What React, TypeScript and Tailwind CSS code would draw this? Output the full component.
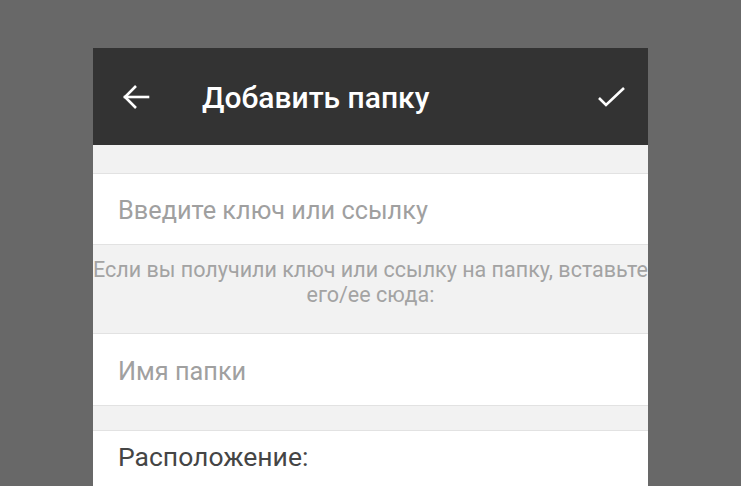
import React from "react";

export default function App() {
  return (
    <div
      className="h-[486px] w-[741px] overflow-hidden bg-[#686868] flex justify-center pt-[48px]"
      style={{ fontFamily: "Roboto, 'Noto Sans', sans-serif" }}
    >
      <div className="w-[555px] flex flex-col bg-[#f2f2f2] shrink-0">
        <div className="h-[97px] shrink-0 bg-[#333333] flex items-center">
          <div className="w-[109px] flex items-center pl-[29px]">
            <svg width="28" height="28" viewBox="0 0 28 28" fill="none" stroke="#ffffff" strokeWidth="2.6" strokeLinecap="square">
              <path d="M3 14H26" />
              <path d="M14 3L3 14L14 25" strokeLinecap="butt" strokeLinejoin="miter" />
            </svg>
          </div>
          <div className="flex-1 text-white text-[30px] font-medium leading-none pt-[3px]">Добавить папку</div>
          <div className="pr-[22px]">
            <svg width="29" height="22" viewBox="0 0 29 22" fill="none" stroke="#ffffff" strokeWidth="2.6">
              <path d="M2 12L9 19L27 2" />
            </svg>
          </div>
        </div>
        <div className="h-[29px] shrink-0 bg-[#f2f2f2] border-b border-[#e2e2e2]" />
        <div className="h-[71px] shrink-0 bg-white border-b border-[#e2e2e2] flex items-center pl-[25px] pt-[3px]">
          <span className="text-[25.3px] text-[#a0a0a0]">Введите ключ или ссылку</span>
        </div>
        <div className="h-[89px] shrink-0 bg-[#f2f2f2] border-b border-[#e2e2e2] overflow-hidden pt-[12px]">
          <p className="text-center text-[21.5px] leading-[25px] text-[#a3a3a3] whitespace-nowrap -mx-[20px]">
            Если вы получили ключ или ссылку на папку, вставьте
            <br />
            его/ее сюда:
          </p>
        </div>
        <div className="h-[72px] shrink-0 bg-white border-b border-[#e2e2e2] flex items-center pl-[25px] pt-[4px]">
          <span className="text-[25.3px] text-[#a0a0a0]">Имя папки</span>
        </div>
        <div className="h-[25px] shrink-0 bg-[#f2f2f2] border-b border-[#e2e2e2]" />
        <div className="bg-white pl-[25px] pt-[9px] h-[120px] shrink-0">
          <div className="text-[26.5px] text-[#454545] leading-[34px]">Расположение:</div>
          <div className="text-[21px] text-[#b0b0b0] leading-[24px] mt-[9px]">/storage/emulated/0/Resilio Sync/Folder</div>
        </div>
      </div>
    </div>
  );
}
